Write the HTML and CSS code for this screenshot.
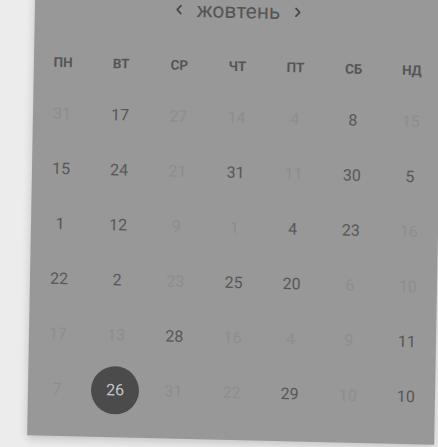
FILE: index.html
```html
<!DOCTYPE html>
<html lang="uk">
<head>
<meta charset="utf-8">
<title>Календар</title>
<link rel="stylesheet" href="styles.css">
</head>
<body>
<div class="card">
  <div class="month">
    <span class="nav"><svg width="6" height="10" viewBox="0 0 6 10"><path d="M5 1 L1.3 5 L5 9" fill="none" stroke="#474747" stroke-width="1.7" stroke-linecap="round" stroke-linejoin="round"/></svg></span>
    <span class="title">жовтень</span>
    <span class="nav"><svg width="6" height="10" viewBox="0 0 6 10"><path d="M1 1 L4.7 5 L1 9" fill="none" stroke="#474747" stroke-width="1.7" stroke-linecap="round" stroke-linejoin="round"/></svg></span>
  </div>
  <div class="weekdays">
    <div>ПН</div><div>ВТ</div><div>СР</div><div>ЧТ</div><div>ПТ</div><div>СБ</div><div>НД</div>
  </div>
  <div class="days">
    <div class="day">31</div><div class="day on">17</div><div class="day">27</div><div class="day">14</div><div class="day">4</div><div class="day on">8</div><div class="day">15</div>
    <div class="day on">15</div><div class="day on">24</div><div class="day">21</div><div class="day on">31</div><div class="day">11</div><div class="day on">30</div><div class="day on">5</div>
    <div class="day on">1</div><div class="day on">12</div><div class="day">9</div><div class="day">1</div><div class="day on">4</div><div class="day on">23</div><div class="day">16</div>
    <div class="day on">22</div><div class="day on">2</div><div class="day">23</div><div class="day on">25</div><div class="day on">20</div><div class="day">6</div><div class="day">10</div>
    <div class="day">17</div><div class="day">13</div><div class="day on">28</div><div class="day">16</div><div class="day">4</div><div class="day">9</div><div class="day on">11</div>
    <div class="day">7</div><div class="day sel"><span>26</span></div><div class="day">31</div><div class="day">22</div><div class="day on">29</div><div class="day">10</div><div class="day on">10</div>
  </div>
</div>
</body>
</html>
```

FILE: styles.css
```css
html, body {
  margin: 0;
  padding: 0;
  height: 100%;
  overflow: hidden;
  background: #ececec;
}

.card {
  width: 407px;
  margin: -18.5px 0 0 33px;
  padding: 10px 0 20px;
  background: #989898;
  box-shadow: 0 3px 10px rgba(0, 0, 0, 0.18);
  transform-origin: 29px 131.5px;
  transform: matrix(1, 0.0229, -0.0182, 1, 0, 0);
  font-family: Roboto, "Liberation Sans", sans-serif;
}

.month {
  height: 30px;
  margin-bottom: 15px;
  display: flex;
  justify-content: center;
  align-items: center;
  gap: 15px;
}

.nav {
  display: flex;
  width: 6px;
  height: 10px;
  margin-bottom: 1px;
}

.title {
  font-size: 21px;
  line-height: 19px;
  padding-top: 1px;
  color: #555555;
}

.weekdays {
  height: 49px;
  display: grid;
  grid-template-columns: repeat(7, 1fr);
  align-items: center;
  text-align: center;
  font-size: 13.5px;
  font-weight: 700;
  color: #555555;
}

.days {
  display: grid;
  grid-template-columns: repeat(7, 1fr);
  grid-auto-rows: 55px;
}

.day {
  display: flex;
  align-items: center;
  justify-content: center;
  font-size: 16px;
  color: #8d8d8d;
}

.day.on {
  color: #575757;
}

.day.sel span {
  width: 48px;
  height: 48px;
  border-radius: 50%;
  background: #4b4b4b;
  color: #c4c4c4;
  display: flex;
  align-items: center;
  justify-content: center;
}
```
